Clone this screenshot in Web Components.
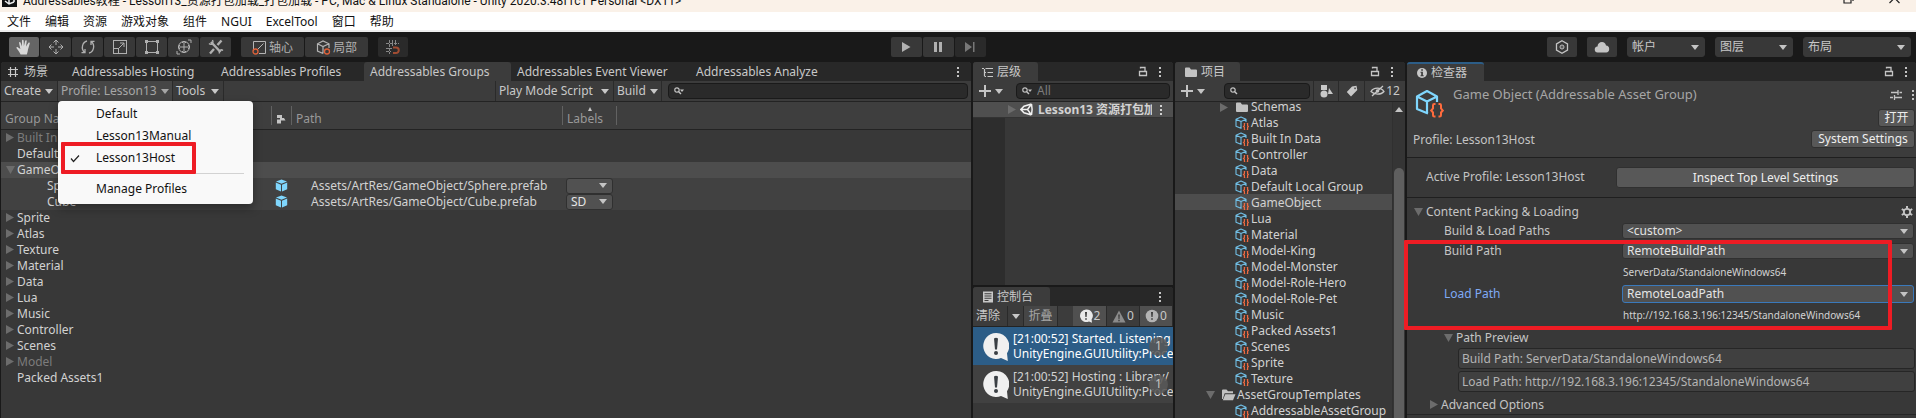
<!DOCTYPE html>
<html lang="zh-CN">
<head>
<meta charset="utf-8">
<title>Unity Editor - Addressables Groups</title>
<style>
html, body { margin: 0; height: 100%; background: #191919; overflow: hidden; }
body { font: 12px/16px "Noto Sans", "Noto Sans CJK SC", sans-serif; color: #d2d2d2; }
</style>
</head>
<body>
<editor-app></editor-app>
<script>
const reset = `<style>
*, *::before { box-sizing: border-box; }
:host([hidden]) { display: none; }
button, input, select { font: inherit; color: inherit; border: 0; margin: 0; padding: 0; background: none; border-radius: 0; outline: 0; text-align: left; }
</style>`;

function define(name, markup, setup) {
  customElements.define(name, class extends HTMLElement {
    constructor() {
      super();
      this.attachShadow({ mode: 'open' });
    }
    connectedCallback() {
      if (this.ready) return;
      this.ready = true;
      const t = document.createElement('template');
      t.innerHTML = reset + (typeof markup === 'function' ? markup(this) : markup);
      this.shadowRoot.append(t.content.cloneNode(true));
      if (setup) setup(this);
    }
  });
}

/* name: [width, height, drawing] */
const ICONS = {
  hand: [16, 16, '<path fill="currentColor" d="M4.6 15.5C3.6 13 1.6 10.7.6 9.3.2 8.5.9 7.9 1.7 8.2L4.4 9.900 3.1 4.2C2.9 3 4.3 2.7 4.6 3.8L5.9 7.4 6 1.7C6 .5 7.5.5 7.6 1.6L7.9 7.2 9.2 1.8C9.500.8 10.9 1 10.7 2.2L10 7.6 12.3 4C12.9 3 14.1 3.7 13.7 4.7L12 10.5C11.6 13 11.3 14 10.8 15.5Z"/>'],
  move: [16, 16, '<g fill="none" stroke="currentColor"><path d="M8 1v5M8 10v5M1 8h5M10 8h5M5.5 3.5 8 1l2.5 2.5M5.5 12.5 8 15l2.5-2.5M3.5 5.5 1 8l2.5 2.5M12.5 5.5 15 8l-2.5 2.5"/></g>'],
  rotate: [16, 16, '<g fill="none" stroke="currentColor" stroke-width="1.3"><path d="M7 2C2.5 3 .5 9.5 4.5 13.5M9 14C13.5 13 15.5 6.5 11.5 2.5M1.5 13.7H5V10M14.5 2.3H11V6"/></g>'],
  scale: [16, 16, '<g fill="none" stroke="currentColor"><rect x="1.5" y="1.5" width="13" height="13"/><rect x="1.5" y="9.5" width="5" height="5"/><path d="M6.5 9.5 12 4M8 4h4v4"/></g>'],
  recttool: [16, 16, '<g fill="none" stroke="currentColor"><path d="M4 2.5h8M4 13.5h8M2.5 4v8M13.5 4v8"/></g><path fill="currentColor" d="M1 1h3v3H1zM12 1h3v3h-3zM1 12h3v3H1zM12 12h3v3h-3z"/>'],
  transform: [16, 16, '<g fill="none" stroke="currentColor"><circle cx="8" cy="8" r="5.5"/><path d="M8 2v12M2 8h12M6 4l2-2 2 2M6 12l2 2 2-2M4 6 2 8l2 2M12 6l2 2-2 2M12 1h3v3M1 12v3h3"/></g>'],
  tools: [16, 16, '<g stroke="currentColor" fill="none"><path stroke-width="2.4" d="M3 3l9.5 10M13.5 1.5 9.5 6M6 10l-4 4.5"/><path stroke-width="1.5" d="M1 4.5C3.5 6.5 6 4 4.5 1M11.5 14.5C10.5 11.5 13 10 15 11.5"/></g>'],
  pivot: [15, 15, '<path fill="none" stroke="#b4b4b4" d="M1.5 9V1.5h12v12H7M5.5 9.5l6-6"/><circle cx="3.5" cy="11.5" r="2.5" fill="none" stroke="#e0623a" stroke-width="1.3"/>'],
  local: [15, 15, '<path fill="none" stroke="#b4b4b4" stroke-width="1.2" d="M7 13.5 1.5 11V3.8L7 1l6 2.8V8M1.5 3.8 7 6.5l6-2.7M7 6.5v7"/><circle cx="11" cy="11.5" r="2.5" fill="none" stroke="#e0623a" stroke-width="1.3"/>'],
  snap: [16, 16, '<path fill="none" stroke="#888" d="M4.5 1v14M10.5 1v5M1 4.5h13M1 9.5h6M7.5 1v6M1 12.5h5" stroke-dasharray="3 1"/><path fill="none" stroke="#a04c32" stroke-width="2" d="M8 8.5h3a2.6 2.6 0 0 1 0 5.5H8"/>'],
  play: [10, 12, '<path fill="currentColor" d="M1 1l8.500 5L1 11z"/>'],
  pause: [10, 12, '<path fill="currentColor" d="M1 1h3v10H1zM6 1h3v10H6z"/>'],
  step: [12, 12, '<path fill="currentColor" d="M1 1l7 5-7 5zM9 1h1.5v10H9z"/>'],
  package: [14, 14, '<path fill="none" stroke="currentColor" stroke-width="1.3" d="M7 .8l5.500 3.100v6.200L7 13.200 1.500 10.100V3.900z"/><circle cx="7" cy="7" r="2" fill="none" stroke="currentColor"/><path fill="currentColor" d="M6.5 6.5h1v1h-1z"/>'],
  cloud: [16, 12, '<path fill="currentColor" d="M4 11.5a3 3 0 0 1-.5-6C3.7 2.5 5.5 1 8 1c2.2 0 3.6 1.3 4 3.5 2 0 3.2 1.5 3.2 3.5s-1.2 3.5-3 3.5z"/>'],
  caret: [8, 5, '<path fill="currentColor" d="M0 0h8L4 5z"/>'],
  closed: [8, 9, '<path fill="#6c6c6c" d="M0 0l8 4.5L0 9z"/>'],
  opened: [9, 8, '<path fill="#6c6c6c" d="M0 0h9L4.5 8z"/>'],
  scene: [12, 12, '<path fill="none" stroke="currentColor" stroke-width="1.2" d="M3.5 1v10M8.5 1v10M1 3.5h10M1 8.5h10"/>'],
  kebab: [4, 12, '<path fill="currentColor" d="M1 1h2v2H1zM1 5h2v2H1zM1 9h2v2H1z"/>'],
  lock: [10, 11, '<path fill="none" stroke="currentColor" stroke-width="1.3" d="M1.5 5.5h7v4h-7zM2.500 2.500V1.5h4.500v4"/>'],
  search: [10, 8, '<circle cx="3" cy="3" r="2.2" fill="none" stroke="currentColor" stroke-width="1.2"/><path stroke="currentColor" stroke-width="1.4" d="M4.5 4.5 7 7"/>'],
  searchdown: [10, 8, '<circle cx="3" cy="3" r="2.2" fill="none" stroke="currentColor" stroke-width="1.2"/><path stroke="currentColor" stroke-width="1.4" d="M4.5 4.5 7 7"/><path fill="currentColor" d="M6 2.5h4L8 5z"/>'],
  plus: [12, 12, '<path fill="currentColor" d="M5 0h2v5h5v2H7v5H5V7H0V5h5z"/>'],
  hierarchy: [12, 11, '<path fill="none" stroke="currentColor" stroke-width="1.2" d="M0 1.5h2M3.5 1.5H11M2.5 5.5H4M5.5 5.5H11M2.5 9.5H4M5.5 9.5H11M2.5 2v7"/>'],
  folder: [14, 11, '<path fill="#c2c2c2" d="M1 1.5Q1 .5 2 .5h3.5L7 2.5h5q1 0 1 1V9q0 1-1 1H2Q1 10 1 9z"/>'],
  openfolder: [15, 12, '<path fill="#c2c2c2" d="M1 10V1.5Q1 .5 2 .5h3.5L7 2.3h5v1.9H3.7L1.8 10zM4.3 5.2H14.5L12 11.2H1.8z"/>'],
  shapes: [14, 14, '<path fill="currentColor" d="M2 1h6v5H2zM10 4l4 6H9z"/><circle cx="5" cy="10" r="3.5" fill="currentColor"/>'],
  tag: [12, 12, '<path fill="currentColor" fill-rule="evenodd" d="M6 1.5 10.5.8 11.3 5 5 11.5.8 7zM9 2.5a.8.8 0 1 0 .1 0z"/>'],
  hiddeneye: [15, 12, '<path fill="none" stroke="currentColor" stroke-width="1.3" d="M1 6.5C3.5 2 11 2 14 6.5 11 10 4.5 10 1 6.5zM2 11 13 1"/><circle cx="7.5" cy="6" r="1.8" fill="currentColor"/>'],
  unity: [13, 13, '<path fill="none" stroke="currentColor" stroke-width="1.5" d="M11.5 1 4 3.2.9 6.5 4 9.8 11.5 12M11.5 1l.6 5.5-.6 5.5M11.5 1 7.5 6.5M11.5 12 7.5 6.5M7.5 6.5H1"/>'],
  group: [14, 14, '<path fill="none" stroke="#71bfe6" stroke-width="1.1" stroke-linejoin="round" d="M6.5 12.5 1 10.3V3.3L6 1l5 2.3V6M1 3.3 6 5.5l5-2.2M6 5.5v7"/><path fill="none" stroke="#ee6a42" stroke-width="1.2" d="M10.2 7.5H9.4v2.2L8.5 10.5l.9.8v2.2h.8M11.8 7.5h.8v2.2l.9.8-.9.8v2.2h-.8"/>'],
  groupbig: [29, 29, '<path fill="none" stroke="#7fd6fd" stroke-width="2.2" stroke-linejoin="round" d="M13 24.5 2 20V7.5L12 2l10 5.5V13M2 7.5 12 12.5l10-5M12 12.5V24"/><path fill="none" stroke="#ff6b3d" stroke-width="2" d="M20.5 15h-1.2q-1.3 0-1.3 1.3v3l-1.8 2.2 1.8 2v2.7q0 1.3 1.3 1.3h1.2M23.5 15h1.2q1.3 0 1.3 1.3v3l1.8 2.2-1.8 2v2.7q0 1.3-1.3 1.3h-1.2"/>'],
  prefab: [13, 13, '<path fill="#7fd6fd" d="M6.5.5 12 2.5 6.5 4.8 1 2.5zM.8 3.6 6 5.7v6.8L.8 10.2zM12.2 3.6 7 5.7v6.8l5.2-2.3z"/>'],
  assettype: [10, 10, '<path fill="#c4c4c4" d="M1 1h5v3h2l1.5 2.5H5V9.5H1V5.5h3V4H1z"/>'],
  sortup: [4, 4, '<path fill="#c4c4c4" d="M2 0l2 4H0z"/>'],
  console: [12, 12, '<path fill="currentColor" fill-rule="evenodd" d="M1 .5h10v11H1zM2.5 2.3v1h7v-1zM2.5 4.5v1h7v-1zM2.5 6.7v1h7v-1zM2.5 8.9v1h4v-1z"/>'],
  info: [12, 12, '<circle cx="6" cy="6" r="5" fill="currentColor"/><path fill="#3c3c3c" d="M5.2 2.3h1.7v1.5H5.2zM4.5 4.8h2.4v3.4h.8v1H4.5v-1h.7V5.8h-.7z"/>'],
  bubble: [14, 14, '<path fill="#e8e8e8" d="M7 .5a6.3 6.3 0 1 0 3 12l3 1.2-.4-3.2A6.3 6.3 0 0 0 7 .5z"/><path fill="#3c3c3c" d="M6 3h2l-.4 5H6.4zM6.2 9.2h1.6v1.5H6.2z"/>'],
  warn: [14, 13, '<path fill="#8b8b8b" d="M7 .5 13.5 12.5H.5z"/><path fill="#3c3c3c" d="M6.2 4.5h1.6L7.5 9h-1zM6.3 9.8h1.4v1.4H6.3z"/>'],
  error: [14, 14, '<circle cx="7" cy="7" r="6.3" fill="#b4b4b4"/><path fill="#3c3c3c" d="M6 3h2l-.4 5H6.4zM6.2 9.2h1.6v1.5H6.2z"/>'],
  log: [26, 28, '<path fill="#f0f0f0" d="M13 0A13 13 0 1 0 18 25.1L24.8 28 24 20.2A13 13 0 0 0 13 0z"/><path fill="#3a3f44" d="M11 5.5q2-1.5 4 0L14 16.5h-2z"/><circle cx="13" cy="20" r="2" fill="#3a3f44"/>'],
  preset: [12, 12, '<path fill="none" stroke="currentColor" stroke-width="1.3" d="M1 3.5h7M9.5 3.5H12M8 1v5M0 8.5h3M5 8.5h7M4.5 6v5"/>'],
  gear: [12, 12, '<circle cx="6" cy="6" r="3.2" fill="none" stroke="currentColor" stroke-width="1.8"/><path stroke="currentColor" stroke-width="2" d="M6 0v2.5M6 9.5V12M.8 3l2.2 1.3M9 7.7 11.2 9M.8 9 3 7.7M9 4.3 11.2 3"/>'],
  check: [10, 9, '<path fill="none" stroke="#222" stroke-width="1.2" d="M1 4.5 3.5 7.5 9 1.5"/>'],
  restore: [11, 12, '<path fill="none" stroke="#222" stroke-width="1.2" d="M1 3h7v8H1zM3 1h7v8"/>'],
  close: [11, 12, '<path stroke="#222" stroke-width="1.2" d="M.5 1l10 10M10.5 1l-10 10"/>'],
  logo: [15, 15, '<path fill="#111" d="M0 0h15v15H0z"/><path fill="none" stroke="#eee" stroke-width="1.5" d="M3 9l4 3 5-2M7 8v4M12 6v4"/>']
};

define('ui-icon', el => {
  const [w, h, d] = ICONS[el.getAttribute('name')];
  return `<style>:host { display: inline-flex; flex: none; } svg { display: block; }</style>
  <svg width="${w}" height="${h}" viewBox="0 0 ${w} ${h}" aria-hidden="true">${d}</svg>`;
});

define('ui-select', el => `<style>
:host { display: grid; grid-template-columns: minmax(0, 1fr) 18px; align-items: center; height: 16px; border-radius: 3px; background: #515151; border: 1px solid #303030; box-sizing: border-box; color: #e4e4e4; }
:host([tone=bar]) { height: 20px; background: #383838; border-color: #383838; color: #c8c8c8; }
:host([tone=focus]) { height: 18px; border-color: #3a79bb; }
select { appearance: none; grid-area: 1 / 1 / 2 / 3; width: 100%; height: 100%; padding: 0 18px 0 4px; line-height: 14px; }
ui-icon { grid-area: 1 / 2; justify-self: center; pointer-events: none; color: #c4c4c4; }
</style><select aria-label="${el.getAttribute('label')}"><option>${el.getAttribute('value').replace('<', '&lt;')}</option></select><ui-icon name="caret"></ui-icon>`);

define('ui-search', el => `<style>
:host { display: flex; align-items: center; gap: 5px; height: 16px; padding: 0 5px; box-sizing: border-box; background: #2a2a2a; border: 1px solid #1a1a1a; border-radius: 4px; color: #c4c4c4; flex: 1; min-width: 0; }
input { flex: 1; min-width: 0; height: 14px; }
input::placeholder { color: #7c7c7c; opacity: 1; }
</style><ui-icon name="${el.getAttribute('icon') || 'searchdown'}"></ui-icon><input type="text" aria-label="Search" placeholder="${el.getAttribute('placeholder') || ''}">`);

define('ui-tab', el => `<style>
:host { display: block; flex: none; height: 19px; }
button { display: flex; align-items: center; gap: 5px; width: 100%; height: 100%; padding: 1px 0 0 6px; white-space: nowrap; color: #c8c8c8; }
:host([active]) button { background: #3c3c3c; border-radius: 3px 3px 0 0; }
:host([focused]) button { border-top: 2px solid #2c5d87; padding-top: 0; }
:host([indent]) button { padding-left: 9px; gap: 3px; }
</style><button role="tab" aria-selected="${el.hasAttribute('active')}">${el.hasAttribute('icon') ? `<ui-icon name="${el.getAttribute('icon')}"></ui-icon>` : ''}<slot></slot></button>`);

/* A docked window: tab strip, tool strip, then its content. */
define('dock-panel', el => `<style>
:host { display: flex; flex-direction: column; min-width: 0; min-height: 0; background: #383838; border-radius: 3px 3px 0 0; }
.tabs { display: flex; flex: none; height: 19px; background: #282828; border-radius: 3px 3px 0 0; color: #c4c4c4; }
.end { margin-left: auto; display: flex; align-items: center; gap: 10px; padding-right: 11px; }
:host([overlay]) .end { padding-right: 8px; }
.end button { display: flex; }
.bar { display: flex; flex: none; align-items: center; height: 21px; background: #3c3c3c; border-bottom: 1px solid #232323; }
.body { flex: 1; min-height: 0; display: flex; flex-direction: column; overflow: hidden; }
:host([overlay]) .body { overflow: visible; }
</style>
<div class="tabs" role="tablist"><slot name="tab"></slot><div class="end">${el.hasAttribute('lock') ? '<button aria-label="Lock"><ui-icon name="lock"></ui-icon></button>' : ''}<button aria-label="Menu"><ui-icon name="kebab"></ui-icon></button></div></div>
${el.hasAttribute('bar') ? '<div class="bar"><slot name="bar"></slot></div>' : ''}
<div class="body"><slot></slot></div>`);

define('bar-button', el => `<style>
:host { display: block; flex: none; height: 20px; border-right: 1px solid #2a2a2a; box-sizing: border-box; }
button { display: flex; align-items: center; justify-content: space-between; gap: 4px; width: 100%; height: 100%; padding: 0 4px 0 3px; white-space: nowrap; color: #c8c8c8; }
:host([plain]) { border: 0; }
:host([lit]) button { background: #505050; }
:host([dim]) button { color: #a6a6a6; background: #464646; }
:host([center]) button { justify-content: center; gap: 1px; padding: 0; }
</style><button aria-label="${el.getAttribute('label') || el.textContent}"><slot></slot>${el.hasAttribute('drop') ? '<ui-icon name="caret"></ui-icon>' : ''}</button>`);

define('title-bar', `<style>
:host { display: flex; height: 12px; overflow: hidden; background: #faf1e8; color: #111; align-items: flex-end; padding-right: 16px; font-family: Roboto, "Noto Sans CJK SC", sans-serif; }
h1 { font: inherit; line-height: 16px; margin: 0 auto 3px 6px; white-space: nowrap; }
.logo { margin: 0 0 5px 2px; }
button { display: flex; margin: 0 0 8px 35px; }
</style><ui-icon class="logo" name="logo"></ui-icon><h1>Addressables教程 - Lesson13_资源打包加载_打包加载 - PC, Mac &amp; Linux Standalone - Unity 2020.3.48f1c1 Personal &lt;DX11&gt;</h1>
<button aria-label="Restore"><ui-icon name="restore"></ui-icon></button><button aria-label="Close"><ui-icon name="close"></ui-icon></button>`);

define('menu-bar', `<style>
:host { display: block; background: #fff; border-bottom: 2px solid #ededed; height: 20px; box-sizing: border-box; color: #111; }
nav { display: flex; gap: 14px; padding: 1px 7px 0; height: 18px; }
button { line-height: 18px; white-space: nowrap; }
</style><nav>${['文件', '编辑', '资源', '游戏对象', '组件', 'NGUI', 'ExcelTool', '窗口', '帮助'].map(t => `<button>${t}</button>`).join('')}</nav>`);

define('tool-button', el => `<style>
:host { display: block; flex: none; width: 31px; height: 20px; }
button { display: flex; align-items: center; justify-content: center; gap: 2px; width: 100%; height: 100%; background: #383838; color: #b0b0b0; border-radius: 2px; white-space: nowrap; }
:host([on]) button { background: #656565; color: #d8d8d8; }
:host([off]) button { background: #2a2a2a; color: #777; }
:host([wide]) { width: 63px; }
:host([square]) { width: 30px; }
:host([square]) button { color: #c4c4c4; }
span { padding-top: 2px; }
span:empty { display: none; }
</style><button aria-label="${el.getAttribute('icon')}"><ui-icon name="${el.getAttribute('icon')}"></ui-icon>${el.hasAttribute('wide') ? '<span><slot></slot></span>' : ''}</button>`);

define('main-toolbar', `<style>
:host { display: grid; grid-template-columns: 891fr auto 931fr; align-items: center; height: 30px; background: #191919; }
div { display: flex; gap: 1px; }
.left { padding-left: 9px; }
.left tool-button:first-child { width: 30px; }
.split { margin-left: 9px; }
.right { gap: 10px; justify-content: flex-end; padding-right: 5px; }
.drop { width: 78px; }
.layout { width: 108px; }
</style>
<div class="left">${['hand', 'move', 'rotate', 'scale', 'recttool', 'transform', 'tools'].map((n, i) => `<tool-button icon="${n}"${i ? '' : ' on'}></tool-button>`).join('')}
<tool-button class="split" icon="pivot" wide>轴心</tool-button><tool-button icon="local" wide>局部</tool-button><tool-button class="split" icon="snap" square off></tool-button></div>
<div><tool-button icon="play"></tool-button><tool-button icon="pause"></tool-button><tool-button icon="step" off></tool-button></div>
<div class="right"><tool-button icon="package" square></tool-button><tool-button icon="cloud" square></tool-button><ui-select class="drop" tone="bar" label="Account" value="帐户"></ui-select><ui-select class="drop" tone="bar" label="Layers" value="图层"></ui-select><ui-select class="layout" tone="bar" label="Layout" value="布局"></ui-select></div>`);

define('profile-menu', `<style>
:host { display: block; position: absolute; z-index: 5; left: 0; top: 20px; width: 195px; padding: 2px 0 4px; box-sizing: border-box; background: #f9f9f9; border-radius: 4px; box-shadow: 0 4px 10px rgba(0,0,0,.35); color: #111; }
button { display: grid; grid-template-columns: 38px 1fr; align-items: center; width: 100%; height: 22px; line-height: 22px; }
ui-icon { justify-self: center; padding-right: 4px; }
hr { margin: 4px 9px; border: 0; border-top: 1px solid #d2d2d2; }
.mark { position: absolute; left: 3px; top: 41px; width: 135px; height: 32px; border: 4px solid #ee1c24; border-radius: 1px; pointer-events: none; }
</style>
<button><span></span>Default</button><button><span></span>Lesson13Manual</button><button><ui-icon name="check"></ui-icon>Lesson13Host</button><hr><button><span></span>Manage Profiles</button><div class="mark"></div>`);

const groupRow = ([name, state]) => `<tr class="${state || ''}"><td><span class="name">${state === 'leaf' ? '' : `<ui-icon name="${state === 'sel' ? 'opened' : 'closed'}"></ui-icon>`}<span>${name}</span></span></td><td></td><td></td><td></td><td></td></tr>`;
const assetRow = (name, path, label) => `<tr class="asset"><td><span>${name}</span></td><td><ui-icon name="prefab"></ui-icon></td><td>${path}</td><td><ui-select label="Labels" value="${label}"></ui-select></td><td></td></tr>`;

define('groups-table', `<style>
:host { display: block; flex: 1; }
table { width: 100%; border-collapse: collapse; table-layout: fixed; }
td, th { padding: 0; height: 16px; line-height: 16px; font-weight: normal; text-align: left; white-space: nowrap; vertical-align: middle; }
th { height: 27px; background: #3e3e3e; border-bottom: 1px solid #232323; color: #999; position: relative; padding: 8px 0 0 4px; vertical-align: middle; }
th:not(:last-child) { background: linear-gradient(#626262, #626262) right 4px / 1px 19px no-repeat #3e3e3e; }
th ui-icon { display: flex; }
.sort { position: absolute; left: 25px; top: 5px; }
.name { display: grid; grid-template-columns: 11px 1fr; padding-left: 5px; align-items: center; }
.name span { grid-column: 2; }
.sel td { background: #4d4d4d; }
.asset td { background: #414141; }
.asset td:first-child { padding-left: 46px; }
.asset td:nth-child(2) ui-icon { display: flex; padding-left: 3px; }
.asset td:nth-child(3) { padding-left: 19px; }
.asset td:nth-child(4) { padding: 0 4px 0 3px; }
.dim td { color: #7c7c7c; }
</style>
<table><colgroup><col style="width:271px"><col style="width:20px"><col style="width:271px"><col style="width:54px"><col></colgroup>
<thead><tr><th>Group Name \\ Addressable Name</th><th><ui-icon name="assettype"></ui-icon></th><th>Path</th><th><ui-icon class="sort" name="sortup"></ui-icon>Labels</th><th></th></tr></thead>
<tbody>${groupRow(['Built In Data', 'dim'])}${groupRow(['Default Local Group', 'leaf'])}${groupRow(['GameObject', 'sel'])}
${assetRow('Sphere', 'Assets/ArtRes/GameObject/Sphere.prefab', '')}${assetRow('Cube', 'Assets/ArtRes/GameObject/Cube.prefab', 'SD')}
${[['Sprite'], ['Atlas'], ['Texture'], ['Material'], ['Data'], ['Lua'], ['Music'], ['Controller'], ['Scenes'], ['Model', 'dim'], ['Packed Assets1', 'leaf']].map(groupRow).join('')}</tbody></table>`);

define('hierarchy-tree', `<style>
:host { display: flex; flex-direction: column; flex: 1; }
.row { display: flex; align-items: center; height: 15px; background: #4f4f4f; padding: 0 10px 0 35px; }
.row b { flex: 1; min-width: 0; overflow: hidden; white-space: nowrap; line-height: 15px; margin: 0 7px 0 5px; }
.row .logo { margin-left: 4px; color: #f0f0f0; }
.area { flex: 1; background: linear-gradient(#2d2d2d, #2d2d2d) 0 0 / 32px 100% no-repeat #383838; border-top: 1px solid #333; }
</style><div class="row"><ui-icon name="closed"></ui-icon><ui-icon class="logo" name="unity"></ui-icon><b>Lesson13 资源打包加载</b><ui-icon name="kebab"></ui-icon></div><div class="area"></div>`);

define('console-entry', el => `<style>
:host { display: flex; position: relative; height: 38px; overflow: hidden; padding: 4px 0 4px 10px; gap: 4px; box-sizing: border-box; background: #414141; }
:host([selected]) { background: #2c5d87; color: #fff; }
p { margin: 0; line-height: 15px; white-space: nowrap; }
.count { position: absolute; right: 5px; top: 10px; width: 19px; height: 19px; line-height: 18px; border-radius: 10px; background: rgba(88,88,88,.88); color: #c4c4c4; text-align: center; }
ui-icon { padding-top: 2px; }
</style><ui-icon name="log"></ui-icon><p><slot></slot></p><span class="count">1</span>`);

define('tree-row', el => `<style>
:host { display: block; flex: none; height: 16px; padding: 1px 0 0 45px; box-sizing: border-box; }
:host([selected]) { background: #4d4d4d; }
:host([parent]) { padding-left: 31px; }
div { display: grid; grid-template-columns: 14px 15px 1fr; column-gap: 1px; align-items: center; white-space: nowrap; height: 15px; }
.label { grid-column: 3; }
.icon { grid-column: 2; }
</style><div>${el.hasAttribute('fold') ? `<ui-icon name="${el.getAttribute('fold')}"></ui-icon>` : ''}<ui-icon class="icon" name="${el.getAttribute('icon') || 'group'}"></ui-icon><span class="label"><slot></slot></span></div>`);

define('project-tree', `<style>
:host { display: grid; grid-template-columns: minmax(0, 1fr) 13px; flex: 1; min-height: 0; }
.list { display: flex; flex-direction: column; overflow: hidden; justify-content: flex-end; }
.scroll { display: flex; flex-direction: column; align-items: center; background: #353535; border-left: 1px solid #303030; color: #c4c4c4; overflow: hidden; }
.up { transform: rotate(180deg); padding: 0 0 5px; margin-bottom: 56px; }
.thumb { flex: 1; width: 10px; background: #5f5f5f; border-radius: 5px 5px 0 0; }
</style><div class="list"><tree-row fold="closed" icon="folder">Schemas</tree-row>
${['Atlas', 'Built In Data', 'Controller', 'Data', 'Default Local Group', 'GameObject', 'Lua', 'Material', 'Model-King', 'Model-Monster', 'Model-Role-Hero', 'Model-Role-Pet', 'Music', 'Packed Assets1', 'Scenes', 'Sprite', 'Texture'].map(t => `<tree-row${t === 'GameObject' ? ' selected' : ''}>${t}</tree-row>`).join('')}
<tree-row parent fold="opened" icon="openfolder">AssetGroupTemplates</tree-row><tree-row>AddressableAssetGroup</tree-row></div>
<div class="scroll"><ui-icon class="up" name="caret"></ui-icon><div class="thumb"></div></div>`);

define('inspector-view', `<style>
:host { display: block; color: #c4c4c4; }
.btn { display: block; background: #585858; border: 1px solid #303030; border-radius: 3px; color: #eee; text-align: center; height: 18px; line-height: 16px; padding: 0 4px; white-space: nowrap; }
header { display: grid; grid-template-columns: 40px 1fr auto; grid-template-rows: 28px 21px 27px; background: #3c3c3c; padding: 0 1px 0 6px; border-bottom: 1px solid #1f1f1f; }
header h2 { font: inherit; font-size: 13px; line-height: 27px; margin: 0; color: #a6a6a6; white-space: nowrap; }
header .cube { padding: 8px 0 0 2px; grid-row: 1 / 3; align-items: flex-start; }
.acts { display: flex; align-items: center; justify-content: flex-end; gap: 9px; }
.acts button { display: flex; }
.open { grid-column: 3; justify-self: end; width: 37px; }
.profile { grid-column: 1 / 3; line-height: 20px; }
.system { width: 104px; }
.active { display: grid; grid-template-columns: 190px 1fr; align-items: center; height: 40px; padding: 0 1px 0 19px; border-bottom: 1px solid #1f1f1f; }
.active .btn { height: 21px; }
.active span { padding-bottom: 2px; white-space: nowrap; }
.fold { display: flex; align-items: center; gap: 3px; padding-left: 7px; line-height: 16px; }
.fold.main { padding: 6px 3px 2px 7px; height: 23px; }
.fold.main button { margin-left: auto; display: flex; }
.field { display: grid; grid-template-columns: 178px minmax(0, 1fr); align-items: center; height: 20px; padding: 0 2px 0 37px; }
.value { font-size: 10px; line-height: 23px; padding-left: 216px; height: 23px; color: #d2d2d2; }
.blue { color: #7faaf5; }
.paths { position: relative; }
.mark { position: absolute; left: -3px; right: 24px; top: -1px; height: 90px; border: 4px solid #ee1c24; border-radius: 1px; pointer-events: none; }
.box { display: flex; align-items: center; height: 21px; margin: 0 1px 2px 51px; padding-left: 3px; background: #404040; border: 1px solid #262626; border-radius: 3px; color: #b4b4b4; white-space: nowrap; }
.sub { padding: 0 0 0 37px; height: 21px; }
.adv { padding: 1px 0 0 23px; height: 21px; border-bottom: 1px solid #262626; gap: 3px; }
</style>
<header><ui-icon class="cube" name="groupbig"></ui-icon><h2>Game Object (Addressable Asset Group)</h2><div class="acts"><button aria-label="Presets"><ui-icon name="preset"></ui-icon></button><button aria-label="Menu"><ui-icon name="kebab"></ui-icon></button></div>
<button class="btn open">打开</button><div class="profile">Profile: Lesson13Host</div><button class="btn system">System Settings</button></header>
<div class="active"><span>Active Profile: Lesson13Host</span><button class="btn">Inspect Top Level Settings</button></div>
<div class="fold main"><ui-icon name="opened"></ui-icon><span>Content Packing &amp; Loading</span><button aria-label="Settings"><ui-icon name="gear"></ui-icon></button></div>
<div class="field"><span>Build &amp; Load Paths</span><ui-select label="Build &amp; Load Paths" value="&lt;custom>"></ui-select></div>
<div class="paths"><div class="field"><span>Build Path</span><ui-select label="Build Path" value="RemoteBuildPath"></ui-select></div><div class="value">ServerData/StandaloneWindows64</div>
<div class="field"><span class="blue">Load Path</span><ui-select tone="focus" label="Load Path" value="RemoteLoadPath"></ui-select></div><div class="value">http://192.168.3.196:12345/StandaloneWindows64</div><div class="mark"></div></div>
<div class="fold sub"><ui-icon name="opened"></ui-icon><span>Path Preview</span></div>
<div class="box">Build Path: ServerData/StandaloneWindows64</div><div class="box">Load Path: http://192.168.3.196:12345/StandaloneWindows64</div>
<div class="fold adv"><ui-icon name="closed"></ui-icon><span>Advanced Options</span></div>`);

define('editor-app', `<style>
:host { display: flex; flex-direction: column; height: 100vh; }
main { flex: 1; min-height: 0; display: grid; grid-template: minmax(0, 1fr) / minmax(0, 1fr) 200px 230px 509px; gap: 2px; padding-left: 1px; }
.stack { display: grid; grid-template-rows: minmax(0, 223fr) minmax(0, 131fr); gap: 2px; min-width: 0; }
.profile { position: relative; }
.push { margin-left: auto; border-left: 1px solid #2a2a2a; }
.find { margin: 0 3px 0 6px; }
.add { display: flex; align-items: center; gap: 4px; width: 31px; margin: 0 6px; color: #c4c4c4; }
</style>
<title-bar></title-bar><menu-bar></menu-bar><main-toolbar></main-toolbar>
<main>
<dock-panel bar>
<ui-tab slot="tab" icon="scene" style="width:65px">场景</ui-tab><ui-tab slot="tab" style="width:149px">Addressables Hosting</ui-tab><ui-tab slot="tab" style="width:149px">Addressables Profiles</ui-tab><ui-tab slot="tab" active style="width:147px">Addressables Groups</ui-tab><ui-tab slot="tab" style="width:179px">Addressables Event Viewer</ui-tab><ui-tab slot="tab" style="width:149px">Addressables Analyze</ui-tab>
<bar-button slot="bar" drop style="width:57px">Create</bar-button>
<div slot="bar" class="profile"><bar-button drop dim style="width:115px">Profile: Lesson13</bar-button><profile-menu></profile-menu></div>
<bar-button slot="bar" drop style="width:51px">Tools</bar-button>
<bar-button slot="bar" class="push" drop style="width:119px">Play Mode Script</bar-button><bar-button slot="bar" drop style="width:48px">Build</bar-button>
<ui-search slot="bar" class="find" style="flex:0 0 300px"></ui-search>
<groups-table></groups-table>
</dock-panel>
<div class="stack">
<dock-panel lock bar>
<ui-tab slot="tab" icon="hierarchy" indent active style="width:65px">层级</ui-tab>
<div slot="bar" class="add"><ui-icon name="plus"></ui-icon><ui-icon name="caret"></ui-icon></div><ui-search slot="bar" class="find" placeholder="All" style="margin-left:0"></ui-search>
<hierarchy-tree></hierarchy-tree>
</dock-panel>
<dock-panel bar>
<ui-tab slot="tab" icon="console" indent active style="width:77px">控制台</ui-tab>
<bar-button slot="bar" style="width:35px">清除</bar-button><bar-button slot="bar" center drop label="Clear options" style="width:16px"></bar-button><bar-button slot="bar" dim center style="width:34px">折叠</bar-button><bar-button slot="bar" plain label="Space" style="width:15px"></bar-button>
<bar-button slot="bar" lit center style="width:34px"><ui-icon name="bubble"></ui-icon>2</bar-button><bar-button slot="bar" center style="width:33px"><ui-icon name="warn"></ui-icon>0</bar-button><bar-button slot="bar" lit center style="width:33px"><ui-icon name="error"></ui-icon>0</bar-button>
<console-entry selected>[21:00:52] Started. Listening<br>UnityEngine.GUIUtility:Proce</console-entry>
<console-entry>[21:00:52] Hosting : Library/<br>UnityEngine.GUIUtility:Proce</console-entry>
</dock-panel>
</div>
<dock-panel lock bar>
<ui-tab slot="tab" icon="folder" indent active style="width:65px">项目</ui-tab>
<div slot="bar" class="add"><ui-icon name="plus"></ui-icon><ui-icon name="caret"></ui-icon></div><ui-search slot="bar" class="find" icon="search"></ui-search>
<bar-button slot="bar" center label="By type" style="width:26px;border-left:1px solid #2a2a2a"><ui-icon name="shapes"></ui-icon></bar-button><bar-button slot="bar" center label="By label" style="width:26px"><ui-icon name="tag"></ui-icon></bar-button><bar-button slot="bar" center plain style="width:40px"><ui-icon name="hiddeneye"></ui-icon>12</bar-button>
<project-tree></project-tree>
</dock-panel>
<dock-panel lock overlay>
<ui-tab slot="tab" icon="info" indent active focused style="width:77px">检查器</ui-tab>
<inspector-view></inspector-view>
</dock-panel>
</main>`);
</script>
</body>
</html>
